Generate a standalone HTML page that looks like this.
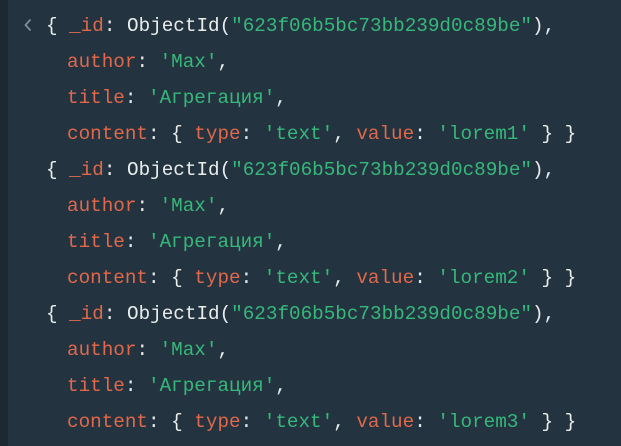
<!DOCTYPE html>
<html><head><meta charset="utf-8"><style>
html,body{margin:0;padding:0;}
body{width:621px;height:446px;background:#243340;overflow:hidden;position:relative;font-family:"Liberation Mono","DejaVu Sans Mono",monospace;font-size:19.3px;color:#e8edeb;}
.strip{position:absolute;left:0;top:0;width:8px;height:446px;background:#1c2832;}
.l{position:absolute;left:46px;white-space:pre;line-height:36px;height:36px;}
.i{left:67px;}
.k{color:#e0684b;}
.s{color:#35b87a;}
.chev{position:absolute;left:23px;top:17px;}
</style></head><body>
<div class="strip"></div>
<svg class="chev" width="10" height="16" viewBox="0 0 10 16"><path d="M7.5 2.5 L2.5 8 L7.5 13.5" fill="none" stroke="#7f8d98" stroke-width="1.8"/></svg>
<div class="l" style="top:8px">{ <span class="k">_id</span>: ObjectId(<span class="s">"623f06b5bc73bb239d0c89be"</span>),</div>
<div class="l i" style="top:44px"><span class="k">author</span>: <span class="s">'Max'</span>,</div>
<div class="l i" style="top:80px"><span class="k">title</span>: <span class="s">'Агрегация'</span>,</div>
<div class="l i" style="top:116px"><span class="k">content</span>: { <span class="k">type</span>: <span class="s">'text'</span>, <span class="k">value</span>: <span class="s">'lorem1'</span> } }</div>
<div class="l" style="top:152px">{ <span class="k">_id</span>: ObjectId(<span class="s">"623f06b5bc73bb239d0c89be"</span>),</div>
<div class="l i" style="top:188px"><span class="k">author</span>: <span class="s">'Max'</span>,</div>
<div class="l i" style="top:224px"><span class="k">title</span>: <span class="s">'Агрегация'</span>,</div>
<div class="l i" style="top:260px"><span class="k">content</span>: { <span class="k">type</span>: <span class="s">'text'</span>, <span class="k">value</span>: <span class="s">'lorem2'</span> } }</div>
<div class="l" style="top:296px">{ <span class="k">_id</span>: ObjectId(<span class="s">"623f06b5bc73bb239d0c89be"</span>),</div>
<div class="l i" style="top:332px"><span class="k">author</span>: <span class="s">'Max'</span>,</div>
<div class="l i" style="top:368px"><span class="k">title</span>: <span class="s">'Агрегация'</span>,</div>
<div class="l i" style="top:404px"><span class="k">content</span>: { <span class="k">type</span>: <span class="s">'text'</span>, <span class="k">value</span>: <span class="s">'lorem3'</span> } }</div>
</body></html>
